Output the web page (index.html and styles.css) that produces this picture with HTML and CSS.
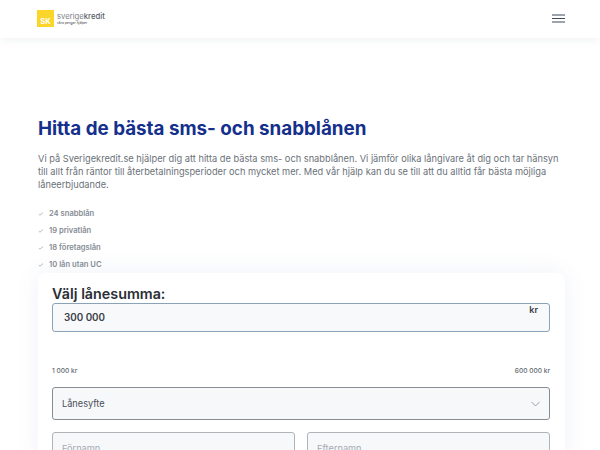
FILE: index.html
```html
<!DOCTYPE html>
<html lang="sv">
<head>
  <meta charset="utf-8">
  <title>Sverigekredit</title>
  <link rel="stylesheet" href="styles.css">
</head>
<body>
  <header class="topbar">
    <a class="brand" href="#">
      <span class="brand-mark">SK</span>
      <span class="brand-text">
        <span class="brand-name">sverige<b>kredit</b></span>
        <span class="brand-tag">våra pengar hjälper</span>
      </span>
    </a>
    <button class="menu-btn" aria-label="Meny">
      <svg width="13" height="9" viewBox="0 0 13 9"><path d="M0 1h13M0 4.5h13M0 8h13" stroke="#3f4a5a" stroke-width="1.2" fill="none"/></svg>
    </button>
  </header>

  <main class="content">
    <h1>Hitta de bästa sms- och snabblånen</h1>
    <p class="intro">Vi på Sverigekredit.se hjälper dig att hitta de bästa sms- och snabblånen. Vi jämför olika långivare åt dig och tar hänsyn till allt från räntor till återbetalningsperioder och mycket mer. Med vår hjälp kan du se till att du alltid får bästa möjliga låneerbjudande.</p>

    <ul class="checks">
      <li><svg width="6" height="5" viewBox="0 0 6 5"><path d="M.8 3.2l1.2 1L5 1.6" stroke="#a3abb4" stroke-width=".8" fill="none"/></svg>24 snabblån</li>
      <li><svg width="6" height="5" viewBox="0 0 6 5"><path d="M.8 3.2l1.2 1L5 1.6" stroke="#a3abb4" stroke-width=".8" fill="none"/></svg>19 privatlån</li>
      <li><svg width="6" height="5" viewBox="0 0 6 5"><path d="M.8 3.2l1.2 1L5 1.6" stroke="#a3abb4" stroke-width=".8" fill="none"/></svg>18 företagslån</li>
      <li><svg width="6" height="5" viewBox="0 0 6 5"><path d="M.8 3.2l1.2 1L5 1.6" stroke="#a3abb4" stroke-width=".8" fill="none"/></svg>10 lån utan UC</li>
    </ul>

    <section class="card">
      <h2>Välj lånesumma:</h2>
      <div class="amount">
        <span class="amount-value">300 000</span>
        <span class="amount-unit">kr</span>
      </div>
      <div class="range">
        <span>1 000 kr</span>
        <span>600 000 kr</span>
      </div>
      <div class="field select">
        <span>Lånesyfte</span>
        <svg width="9" height="6" viewBox="0 0 9 6"><path d="M.4.8L4.5 5 8.6.8" stroke="#9aa2aa" stroke-width="1" fill="none"/></svg>
      </div>
      <div class="name-row">
        <div class="field placeholder">Förnamn</div>
        <div class="field placeholder">Efternamn</div>
      </div>
    </section>
  </main>
</body>
</html>
```

FILE: styles.css
```css
html, body {
  height: 100%;
}

body {
  margin: 0;
  background: #fff;
  color: #1f2933;
  font-family: Inter, "Liberation Sans", sans-serif;
  overflow: hidden;
}

.topbar {
  height: 38px;
  box-sizing: border-box;
  padding: 0 35px 2px 37px;
  display: flex;
  align-items: center;
  justify-content: space-between;
  box-shadow: 0 2px 8px rgba(30, 50, 90, 0.07);
}

.brand {
  display: flex;
  align-items: center;
  gap: 3px;
  text-decoration: none;
}

.brand-mark {
  width: 17px;
  height: 17px;
  display: flex;
  align-items: flex-end;
  justify-content: center;
  background: #fbd52a;
  color: #fff;
  font-size: 7.5px;
  font-weight: 700;
  line-height: 11px;
}

.brand-text {
  display: flex;
  flex-direction: column;
  padding-top: 1px;
}

.brand-name {
  font-size: 7.7px;
  line-height: 9px;
  color: #7d838a;
}

.brand-name b {
  font-weight: 500;
  color: #565c63;
}

.brand-tag {
  font-size: 3.3px;
  line-height: 5px;
  color: #444;
}

.menu-btn {
  padding: 0;
  border: 0;
  background: none;
  display: flex;
}

.content {
  padding: 79px 35px 0 38px;
}

h1 {
  margin: 0;
  color: #14308c;
  font-size: 18.8px;
  line-height: 23px;
  font-weight: 700;
}

.intro {
  margin: 12px 0 0;
  color: #6a7178;
  font-size: 9.25px;
  line-height: 13px;
}

.checks {
  margin: 14px 0 0;
  padding: 0;
  list-style: none;
}

.checks li {
  display: flex;
  align-items: center;
  gap: 5px;
  height: 17px;
  color: #858c94;
  font-size: 7.6px;
  font-weight: 600;
}

.card {
  padding: 13px 15px 0 14px;
  border-radius: 8px;
  background: #fff;
  box-shadow: 0 0 24px rgba(60, 90, 160, 0.08);
}

h2 {
  margin: 0 0 1px;
  color: #2b2f36;
  font-size: 14.3px;
  line-height: 16px;
  font-weight: 600;
}

.amount {
  height: 27px;
  padding: 0 4px 0 11px;
  display: flex;
  justify-content: space-between;
  border: 1px solid #8ba3b8;
  border-radius: 3px;
  background: #f7f9fb;
  font-weight: 600;
}

.amount-value {
  align-self: center;
  font-size: 9.8px;
  color: #3a4048;
}

.amount-unit {
  margin-right: 7px;
  font-size: 9px;
  line-height: 11px;
  color: #3a4048;
}

.range {
  margin-top: 34px;
  display: flex;
  justify-content: space-between;
  font-size: 6.6px;
  line-height: 10px;
  font-weight: 500;
  color: #62686f;
}

.field {
  box-sizing: border-box;
  height: 33px;
  padding: 0 9px;
  display: flex;
  align-items: center;
  border: 1px solid #888d93;
  border-radius: 3px;
  background: #f7f8fa;
  font-size: 9.2px;
  color: #4a5058;
}

.select {
  margin-top: 11px;
  justify-content: space-between;
}

.name-row {
  margin-top: 12px;
  display: grid;
  grid-template-columns: 1fr 1fr;
  gap: 12px;
}

.placeholder {
  color: #a4abb3;
  border-color: #b0b4b9;
}
```
